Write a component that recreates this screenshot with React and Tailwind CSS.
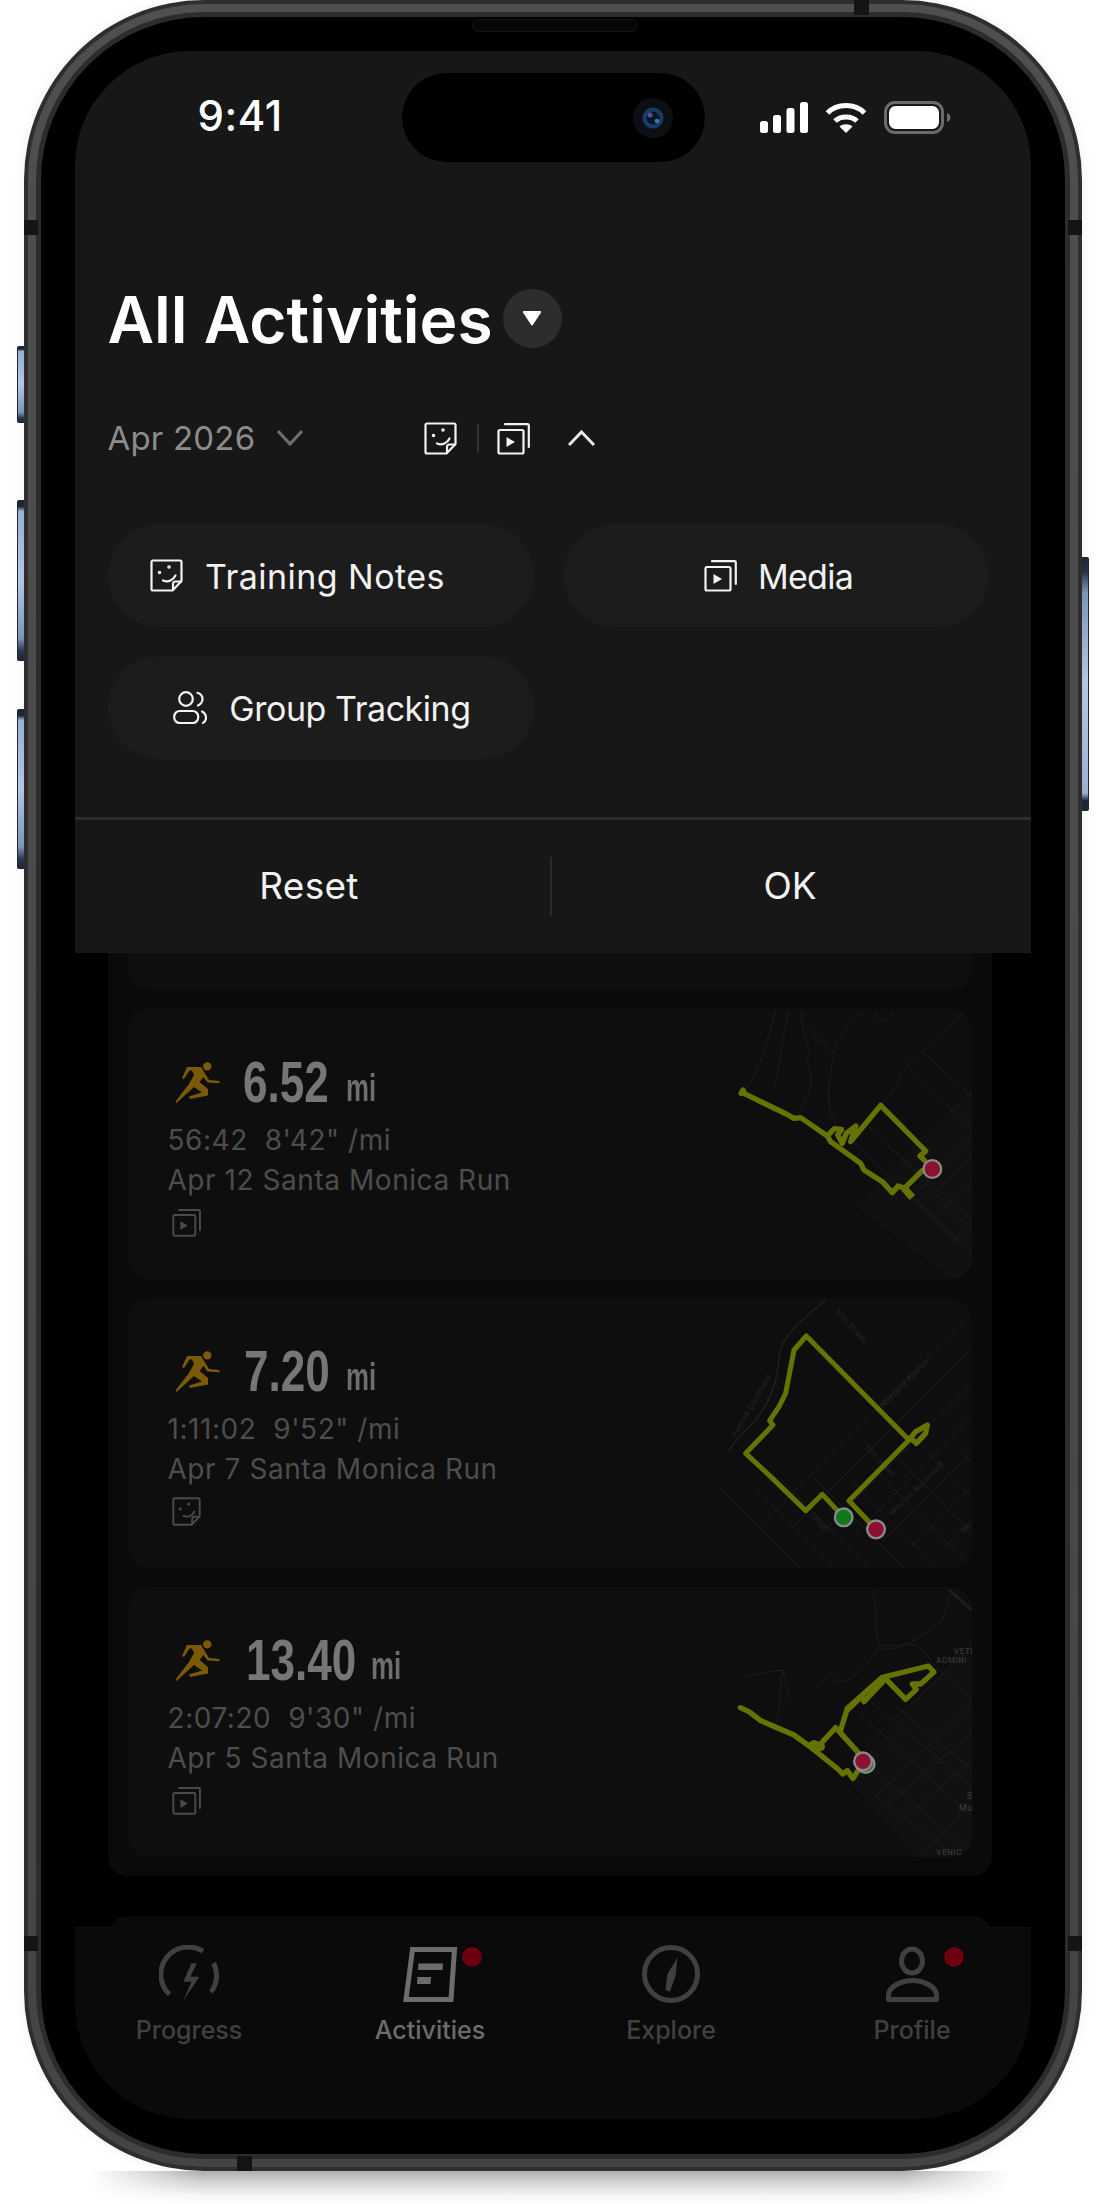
import React from "react";

const NoteIcon = ({ size = 33, color = "#f2f2f2" }) => (
  <svg width={size} height={size} viewBox="0 0 33 33" fill="none" stroke={color} strokeWidth="2.2" strokeLinecap="round" strokeLinejoin="round" className="shrink-0">
    <path d="M3 1.5H30A1.5 1.5 0 0 1 31.5 3V22L22.5 31.5H3A1.5 1.5 0 0 1 1.5 30V3A1.5 1.5 0 0 1 3 1.5Z" />
    <path d="M31 22.5H25.5A2.5 2.5 0 0 0 23 25V31" />
    <path d="M13 21.5C18 23.5 23 21.5 25.5 16.5" />
    <circle cx="9.5" cy="13.5" r="0.7" fill={color} />
    <circle cx="19" cy="8" r="0.7" fill={color} />
  </svg>
);

const MediaIcon = ({ size = 33, color = "#f2f2f2" }) => (
  <svg width={size} height={size} viewBox="0 0 33 33" fill="none" stroke={color} strokeWidth="2.2" strokeLinejoin="round" className="shrink-0">
    <rect x="1.5" y="8" width="25" height="23.5" rx="1.5" />
    <path d="M8 2.2H30.5A1.3 1.3 0 0 1 31.8 3.5V25" strokeLinecap="round" />
    <path d="M9.5 15L18 20L9.5 25Z" fill={color} stroke="none" />
  </svg>
);

const GroupIcon = () => (
  <svg width="34" height="33" viewBox="0 0 34 33" fill="none" stroke="#f2f2f2" strokeWidth="2.2" strokeLinecap="round" strokeLinejoin="round" className="shrink-0">
    <circle cx="13" cy="8" r="6.8" />
    <rect x="1.2" y="20" width="24" height="12" rx="5.5" />
    <path d="M24.5 1.8C28 3 29.5 5.5 29.5 8C29.5 10.5 28 13 25 14.5" />
    <path d="M29 20.5C32 22 33 24.5 33 27C33 29 32 31 30 32" />
  </svg>
);

const Signal = () => (
  <svg width="48" height="31" viewBox="0 0 48 31" fill="#fff">
    <rect x="0" y="19" width="8" height="12" rx="2.5" />
    <rect x="13" y="13" width="8" height="18" rx="2.5" />
    <rect x="26.5" y="6" width="8" height="25" rx="2.5" />
    <rect x="40" y="0" width="8" height="31" rx="2.5" />
  </svg>
);

const Wifi = () => (
  <svg width="42" height="32" viewBox="0 0 42 32" fill="none" stroke="#fff" strokeWidth="5">
    <path d="M2.5 12C12 2 30 2 39.5 12" />
    <path d="M10 20C15.5 14.5 26.5 14.5 32 20" />
    <path d="M14.5 25.5C18 22.5 24 22.5 27.5 25.5L21 32Z" fill="#fff" stroke="none" />
  </svg>
);

const Battery = () => (
  <svg width="67" height="33" viewBox="0 0 67 33" fill="none">
    <rect x="1.5" y="1.5" width="57" height="30" rx="9.5" stroke="#6b6b6b" strokeWidth="3" />
    <rect x="5" y="5" width="50" height="23" rx="6.5" fill="#fff" />
    <path d="M63 12C65.5 13 66.5 14.5 66.5 16.5C66.5 18.5 65.5 20 63 21Z" fill="#6b6b6b" />
  </svg>
);

const Runner = () => (
  <svg width="46" height="42" viewBox="0 0 46 42" fill="#7c5905" className="shrink-0">
    <circle cx="32.3" cy="4.4" r="4.2" />
    <path d="M7 16L12 5H26L34 18L44.5 19V21.2L32.5 20.5L28.5 15L24.5 20L33 27V33.5L15 37L14 34.5L27 30.5L19 25L1.5 41L0.5 39.5L14 22L19 13L17 8.5H14.5L9 17Z" />
  </svg>
);

const seLines = (count, x0, y0, step, len) =>
  Array.from({ length: count }, (_, i) => `M${x0 + i * step} ${y0 - i * step * 0.15}L${x0 + i * step + len} ${y0 - i * step * 0.15 + len}`).join("");
const neLines = (count, x0, y0, step, len) =>
  Array.from({ length: count }, (_, i) => `M${x0 + i * step} ${y0 + i * step * 0.15}L${x0 + i * step + len} ${y0 + i * step * 0.15 - len}`).join("");

const ROUTE = "#667300";

const Marker = ({ x, y, fill }) => (
  <g>
    <circle cx={x} cy={y} r="30" fill="#8a8a8a" />
    <circle cx={x} cy={y} r="23" fill={fill} />
  </g>
);

const Map1 = () => (
  <svg width="273" height="270" viewBox="0 27 819 810" fill="none" className="shrink-0">
    <path d="M470 620L819 270V837H760Z" fill="#111111" />
    <g stroke="#1d1d1d" strokeWidth="3">
      <path d="M230 30C200 140 175 220 140 270M270 30C250 120 240 200 228 260M310 30C300 90 330 120 330 150C315 200 350 230 330 270C320 300 310 320 300 340" />
      <path d="M300 60L405 160C410 120 430 90 495 30M405 160C395 220 380 280 395 340L410 370M530 30C525 70 560 80 580 30" />
      <path d="M790 40L625 195C600 230 595 270 545 315" />
      <path d={seLines(1, 625, 195, 0, 195)} />
      <path d="M670 155L819 290M500 370L819 690M470 430L780 730M560 430L819 660M650 600L819 760" />
      <path d="M570 515L819 270M640 590L819 410M680 600L819 470M720 640L819 545M760 725L819 670" />
    </g>
    <g stroke={ROUTE} strokeWidth="16" strokeLinecap="round" strokeLinejoin="round">
      <path d="M126 280L132 270L136 281L262 342L285 355L305 353L385 408L406 386L428 388L416 405L430 430L442 400L470 378L455 425L545 316L680 453L663 468L677 482" />
      <path d="M670 512L616 565L597 558L580 578L550 545L495 510L485 490L395 425L385 408" />
      <path d="M616 565L640 593" strokeWidth="22" strokeLinecap="butt" />
    </g>
    <Marker x={700} y={507} fill="#8c1030" />
  </svg>
);

const Map2 = () => (
  <svg width="273" height="270" viewBox="0 -6 819 810" fill="none" className="shrink-0">
    <g stroke="#1e1e1e" strokeWidth="3">
      <path d={seLines(10, 60, 560, 90, 400)} />
      <path d={neLines(10, 190, 670, 90, 620)} />
      <path d="M380 0C320 50 250 100 240 170C235 260 200 340 130 400L90 450" strokeWidth="5" />
    </g>
    <g stroke="#141414" strokeWidth="2">
      <path d={seLines(22, 380, 0, 20, 440)} />
    </g>
    <g fill="#242424" fontSize="25" fontFamily="Inter, sans-serif">
      <text transform="translate(405 38) rotate(46)">17th Street</text>
      <text transform="translate(552 325) rotate(-45)">Montana Avenue</text>
      <text transform="translate(495 445) rotate(46)">11th Street</text>
      <text transform="translate(580 650) rotate(-45)">Wilshire Boulevard</text>
      <text transform="translate(330 645) rotate(46)">Street</text>
      <text transform="translate(110 415) rotate(-60)">Avenue Boulevard</text>
      <text transform="translate(795 700) rotate(-45)">Bo</text>
    </g>
    <g stroke={ROUTE} strokeWidth="15" strokeLinecap="round" strokeLinejoin="round">
      <path d="M434 652L370 583L320 632L215 530L140 460L222 375L212 362L240 320L260 280L285 150L322 108L630 420L450 602L531 688" />
      <path d="M630 420L650 395L685 375L680 400L652 430L636 415" strokeWidth="16" />
    </g>
    <Marker x={434} y={652} fill="#0f7a1a" />
    <Marker x={531} y={688} fill="#8c1030" />
  </svg>
);

const Map3 = () => (
  <svg width="273" height="270" viewBox="0 -9 819 810" fill="none" className="shrink-0">
    <path d="M440 560L819 150V801H650Z" fill="#111111" />
    <g stroke="#1d1d1d" strokeWidth="3">
      <path d="M130 260L250 240L275 330M250 240C240 300 250 340 230 400M350 300C380 270 400 230 410 270C440 290 500 240 540 170C560 190 640 170 730 90C750 50 740 30 760 0" />
      <path d="M520 0C540 60 520 100 540 160C600 190 650 120 700 220L819 330" />
      <path d="M470 360L819 680M520 340L819 590M580 340L819 540M480 500L819 790M520 610L760 790" />
      <path d="M500 470L819 170M530 620L819 340M560 650L819 430M600 700L819 510M680 780L819 640" />
      <path d="M750 0L819 60" strokeWidth="9" />
    </g>
    <g fill="#3a3a3a" fontSize="22" fontFamily="Inter, sans-serif" fontWeight="500" letterSpacing="2">
      <text x="765" y="192">VETE</text>
      <text x="712" y="220">ADMINI</text>
      <text x="712" y="796">VENIC</text>
      <text x="803" y="628" fontSize="26">S</text>
      <text x="780" y="662" fontSize="26">Mu</text>
    </g>
    <g stroke={ROUTE} strokeWidth="16" strokeLinecap="round" strokeLinejoin="round">
      <path d="M124 353L150 365L185 392L285 435L340 475L420 540L431 552L445 542L462 565L482 535" />
      <path d="M340 475L345 458L362 465L410 413L480 490" />
      <path d="M340 465L365 470" strokeWidth="26" />
      <path d="M425 420L445 355L550 262L688 228L705 246L665 282L640 282L652 298L620 328L556 262" />
      <path d="M445 360L490 318L495 335L552 275" />
    </g>
    <Marker x={500} y={522} fill="#1f7a2a" />
    <Marker x={492} y={514} fill="#8c1030" />
  </svg>
);

const RunCard = ({ dist, time, title, icon, Map, valuePad = "ml-[22px]", valueWidth = "w-[86px]" }) => (
  <div className="flex h-[270px] justify-between overflow-hidden rounded-[20px] bg-[#0e0e0e]">
    <div className="flex flex-col pl-[40px] pt-[44px]">
      <div className="flex h-[58px] items-end pl-[7px]">
        <div className="mb-[7px]"><Runner /></div>
        <span className={`${valuePad} ${valueWidth} whitespace-nowrap`}>
          <span className="inline-block origin-left scale-x-[0.76] font-['Liberation_Sans',sans-serif] text-[58px] leading-[58px] font-bold text-[#767676]">{dist}</span>
        </span>
        <span className="ml-[17px] w-[30px] whitespace-nowrap">
          <span className="inline-block origin-left scale-x-[0.68] font-['Liberation_Sans',sans-serif] text-[38px] leading-[45px] font-bold text-[#6e6e6e]">mi</span>
        </span>
      </div>
      <div className="mt-[9px] text-[28px] leading-[40px] tracking-[0.55px] whitespace-pre text-[#4d4d4d]">{time}</div>
      <div className="text-[28px] leading-[40px] tracking-[0.55px] whitespace-pre text-[#4d4d4d]">{title}</div>
      <div className="mt-[8px] ml-[4px]">
        {icon === "note" ? <NoteIcon size={29} color="#4a4a4a" /> : <MediaIcon size={29} color="#4a4a4a" />}
      </div>
    </div>
    <Map />
  </div>
);

const TabLabel = ({ children, active }) => (
  <span className={`mt-[11px] text-[25px] leading-[32px] font-medium ${active ? "text-[#6c6c6c]" : "text-[#404040]"}`}>{children}</span>
);

const Dot = ({ className }) => <span className={`absolute top-[2px] size-[20px] rounded-full bg-[#6b000f] ${className}`} />;

const TabBar = () => (
  <div className="absolute inset-x-0 top-[1876px] h-[192px] border-t border-[#0e0e0e] bg-[#0a0a0a]">
    <div className="ml-[-6px] grid w-[964px] grid-cols-4 pt-[17px]">
      <div className="flex flex-col items-center">
        <svg width="60" height="58" viewBox="0 0 60 58" fill="none" stroke="#404040" strokeWidth="5">
          <path d="M10.5 49.5A27.5 27.5 0 0 1 44 6.2" />
          <path d="M54.6 18A27.5 27.5 0 0 1 52 47" />
          <path d="M32.5 18.3L24.3 36.7H32.5L24.3 55.7L40.3 31.7H31.4L37.8 18.3Z" fill="#404040" stroke="none" />
        </svg>
        <TabLabel>Progress</TabLabel>
      </div>
      <div className="flex flex-col items-center">
        <div className="relative h-[58px] w-[56px]">
          <svg width="56" height="58" viewBox="0 0 56 58" fill="none" stroke="#6c6c6c" strokeWidth="5">
            <path d="M10.5 4.5H52.5L49 54.5H4Z" />
            <path d="M16.5 18.5H41L40.5 25H16Z" fill="#6c6c6c" stroke="none" />
            <path d="M15.5 32H29L28.5 39H15Z" fill="#6c6c6c" stroke="none" />
          </svg>
          <Dot className="left-[60px]" />
        </div>
        <TabLabel active>Activities</TabLabel>
      </div>
      <div className="flex flex-col items-center">
        <svg width="60" height="58" viewBox="0 0 60 58" fill="none" stroke="#404040" strokeWidth="5">
          <circle cx="30" cy="29" r="26.5" />
          <path d="M36.5 12.5L34.5 31L29 46.5L24.5 45L26.5 29Z" fill="#404040" stroke="none" />
        </svg>
        <TabLabel>Explore</TabLabel>
      </div>
      <div className="flex flex-col items-center">
        <div className="relative h-[58px] w-[60px]">
          <svg width="60" height="58" viewBox="0 0 60 58" fill="none" stroke="#404040" strokeWidth="5">
            <ellipse cx="30" cy="16" rx="10.5" ry="12" />
            <path d="M6.5 54.5H54.5V50C54.5 42 42 35.5 30.5 35.5C19 35.5 6.5 42 6.5 50Z" strokeLinejoin="round" />
          </svg>
          <Dot className="left-[62px]" />
        </div>
        <TabLabel>Profile</TabLabel>
      </div>
    </div>
  </div>
);

const Pill = ({ icon, label, gap = "gap-[22px]", extra = "" }) => (
  <div className={`flex h-[103px] items-center justify-center rounded-full bg-[#1c1c1c] ${gap} ${extra}`}>
    {icon}
    <span className="mt-[2px] text-[34px] leading-[44px] text-[#f2f2f2]">{label}</span>
  </div>
);

const Panel = () => (
  <div className="absolute inset-x-0 top-0 flex h-[902px] flex-col bg-[#171717]">
    <div className="flex h-[132px] items-center justify-between pr-[80px] pl-[123px]">
      <span className="mb-[2px] text-[42px] leading-[48px] font-medium tracking-[0.5px] text-white">9:41</span>
      <div className="flex items-center gap-[17px]">
        <Signal />
        <Wifi />
        <Battery />
      </div>
    </div>
    <div className="mt-[100px] flex h-[70px] items-center pl-[33px]">
      <h1 className="mt-[4px] text-[64px] leading-[70px] font-semibold text-white">All Activities</h1>
      <div className="ml-[10px] flex size-[59px] items-center justify-center rounded-full bg-[#2d2d2d]">
        <svg width="20" height="15" viewBox="0 0 20 15"><path d="M1 1.5A1 1 0 0 1 2 0H18A1 1 0 0 1 19 1.5L10.8 14A1 1 0 0 1 9.2 14Z" fill="#fff" /></svg>
      </div>
    </div>
    <div className="mt-[65px] flex h-[40px] items-center pl-[33px]">
      <span className="w-[169px] text-[33px] leading-[40px] tracking-[0.2px] text-[#8c8c8c]">Apr 2026</span>
      <svg width="26" height="16" viewBox="0 0 26 16" fill="none" stroke="#6f6f6f" strokeWidth="3"><path d="M1 1L13 14L25 1" /></svg>
      <div className="ml-[121px]"><NoteIcon /></div>
      <div className="ml-[20px] h-[29px] w-[2px] bg-[#303030]" />
      <div className="ml-[18px]"><MediaIcon /></div>
      <svg className="ml-[38px]" width="27" height="16" viewBox="0 0 27 16" fill="none" stroke="#e8e8e8" strokeWidth="3"><path d="M1 15L13.5 2L26 15" /></svg>
    </div>
    <div className="mt-[66px] grid grid-cols-[426px_426px] gap-[29px] pl-[33px]">
      <Pill icon={<NoteIcon />} label={<span className="tracking-[0.45px]">Training Notes</span>} extra="pr-[46px]" />
      <Pill icon={<MediaIcon />} label={<span className="tracking-[-0.7px]">Media</span>} gap="gap-[21px]" extra="pl-[6px]" />
      <Pill icon={<GroupIcon />} label={<span className="tracking-[-0.45px]">Group Tracking</span>} extra="pl-[3px]" />
    </div>
    <div className="mt-[58px] h-[2.5px] w-full bg-[#2d2d2d]" />
    <div className="flex flex-1 items-center">
      <div className="w-[475px] pr-[6px] text-center text-[37px] leading-[44px] tracking-[0.3px] text-[#f2f2f2]">Reset</div>
      <div className="h-[59px] w-[2px] bg-[#2b2b2b]" />
      <div className="flex-1 pr-[2px] text-center text-[37px] leading-[44px] text-[#f2f2f2]">OK</div>
    </div>
  </div>
);

const Screen = () => (
  <div className="relative h-[2068px] w-[956px] overflow-hidden rounded-[115px] bg-black">
    <div className="mx-[33px] mt-[800px] flex w-[884px] flex-col gap-[19px] rounded-[20px] bg-[#0a0a0a] px-[20px] pb-[19px]">
      <div className="h-[139px] rounded-[20px] bg-[#0e0e0e]" />
      <RunCard dist="6.52" time={`56:42  8'42" /mi`} title="Apr 12 Santa Monica Run" icon="media" Map={Map1} />
      <RunCard dist="7.20" time={`1:11:02  9'52" /mi`} title="Apr 7 Santa Monica Run" icon="note" Map={Map2} valuePad="ml-[23px]" valueWidth="w-[85px]" />
      <RunCard dist="13.40" time={`2:07:20  9'30" /mi`} title="Apr 5 Santa Monica Run" icon="media" Map={Map3} valuePad="ml-[25px]" valueWidth="w-[108px]" />
    </div>
    <div className="mx-[33px] mt-[40px] h-[60px] w-[884px] rounded-[20px] bg-[#0a0a0a]" />
    <TabBar />
    <Panel />
    <div className="absolute top-[22px] left-[327px] flex h-[89px] w-[303px] items-center justify-end rounded-full bg-black pr-[32px]">
      <svg width="40" height="40" viewBox="0 0 40 40">
        <circle cx="20" cy="20" r="20" fill="#0c1015" />
        <circle cx="20" cy="20" r="10.5" fill="#1c3a66" />
        <circle cx="20" cy="20" r="6.5" fill="#0b1526" />
        <circle cx="17" cy="17" r="2.5" fill="#5b4f9c" />
        <circle cx="24" cy="23" r="2.3" fill="#3f78ad" />
      </svg>
    </div>
  </div>
);

const Antenna = ({ className }) => <div className={`absolute bg-[#141414] ${className}`} />;

const sideBtn = "absolute w-[7px] rounded-l-[2px] border-l border-[#1d2736] bg-[linear-gradient(180deg,#1d2736_0,#1d2736_4%,#9db4d6_7%,#b7cbe8_50%,#8098bb_86%,#2a3648_94%,#1d2736_100%)]";

export default function App() {
  return (
    <div className="relative h-[2204px] w-[1105px] overflow-hidden bg-white font-['Inter',sans-serif]">
      <div className="absolute top-[2171px] left-[90px] h-[32px] w-[920px] bg-[linear-gradient(180deg,#b4b4b4,#f4f4f4_75%,#ffffff)] [mask-image:linear-gradient(90deg,transparent,black_12%,black_88%,transparent)]" />
      <div className={`${sideBtn} top-[346px] left-[16.5px] h-[77px]`} />
      <div className={`${sideBtn} top-[500px] left-[16.5px] h-[161px]`} />
      <div className={`${sideBtn} top-[709px] left-[16.5px] h-[160px]`} />
      <div className={`${sideBtn} top-[557px] left-[1082px] h-[254px] rotate-180`} />
      <div className="relative ml-[23.5px] h-[2171px] w-[1058.5px] rounded-[180px] bg-[#2e2e2e] p-[4px] shadow-[0_0_14px_rgba(0,0,0,0.06)]">
        <div className="h-full rounded-[176px] bg-linear-to-b from-[#4f4f4f] to-[#444444] p-[8px]">
          <div className="h-full rounded-[168px] bg-[#2c2c2c] p-[5px]">
            <div className="relative h-full rounded-[163px] bg-black px-[34px] pt-[34px]">
              <div className="absolute top-[2px] left-[431px] h-[13px] w-[166px] rounded-full border border-[#141414] bg-[#060606]" />
              <Screen />
            </div>
          </div>
        </div>
        <Antenna className="top-[220px] left-0 h-[15px] w-[14px]" />
        <Antenna className="top-[220px] right-0 h-[15px] w-[14px]" />
        <Antenna className="top-[1936px] left-0 h-[15px] w-[14px]" />
        <Antenna className="top-[1936px] right-0 h-[15px] w-[14px]" />
        <Antenna className="top-0 left-[830px] h-[15px] w-[15px]" />
        <Antenna className="bottom-0 left-[213px] h-[15px] w-[15px]" />
      </div>
    </div>
  );
}
